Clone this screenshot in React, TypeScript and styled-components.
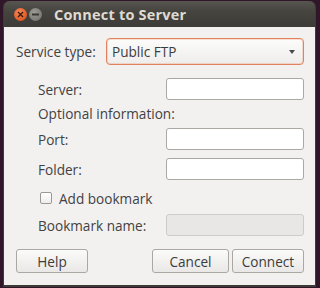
import styled, { createGlobalStyle } from 'styled-components';

const GlobalStyle = createGlobalStyle`
  html, body {
    margin: 0;
    padding: 0;
    background: #2f1628;
  }
  body {
    width: 320px;
    height: 288px;
    overflow: hidden;
    font-family: 'Open Sans', 'DejaVu Sans', sans-serif;
  }
`;

export default function App() {
  return (
    <>
      <GlobalStyle />
      <Desktop>
        <Window>
          <TitleBar>
            <WindowButtons>
              <CloseButton>
                <svg width="7" height="7" viewBox="0 0 7 7">
                  <path d="M1 1 L6 6 M6 1 L1 6" stroke="#3a1a0c" strokeWidth="1.4" />
                </svg>
              </CloseButton>
              <MinButton>
                <svg width="7" height="3" viewBox="0 0 7 3">
                  <rect x="0" y="0.5" width="7" height="2" fill="#3a3935" />
                </svg>
              </MinButton>
            </WindowButtons>
            <Title>Connect to Server</Title>
          </TitleBar>
          <Body>
            <ServiceRow>
              <Label>Service type:</Label>
              <Combo>
                <span>Public FTP</span>
                <Arrow />
              </Combo>
            </ServiceRow>
            <FieldRow $top={13}>
              <Label>Server:</Label>
              <Entry />
            </FieldRow>
            <Section>Optional information:</Section>
            <FieldRow $top={7}>
              <Label>Port:</Label>
              <Entry />
            </FieldRow>
            <FieldRow $top={8}>
              <Label>Folder:</Label>
              <Entry />
            </FieldRow>
            <CheckRow>
              <CheckBox />
              <Label>Add bookmark</Label>
            </CheckRow>
            <FieldRow $top={8}>
              <Label>Bookmark name:</Label>
              <Entry $disabled />
            </FieldRow>
            <ButtonRow>
              <Button $width={72}>Help</Button>
              <Spacer />
              <Button $width={77}>Cancel</Button>
              <Button $width={72}>Connect</Button>
            </ButtonRow>
          </Body>
        </Window>
      </Desktop>
    </>
  );
}

const Desktop = styled.div`
  padding: 1px 4px 0 3px;
  height: 288px;
  box-sizing: border-box;
`;

const Window = styled.div`
  width: 313px;
  height: 286px;
  display: flex;
  flex-direction: column;
  background: #3c3b37;
  border-radius: 6px 6px 0 0;
  box-sizing: border-box;
  padding: 0 1px 2px 1px;
`;

const TitleBar = styled.div`
  height: 26px;
  display: flex;
  align-items: center;
  background: linear-gradient(#57554f, #46443f 40%, #3c3b37);
  border-radius: 6px 6px 0 0;
  padding-left: 10px;
`;

const WindowButtons = styled.div`
  display: flex;
  gap: 2px;
  align-items: center;
`;

const CloseButton = styled.div`
  width: 13px;
  height: 13px;
  border-radius: 50%;
  background: radial-gradient(circle at 40% 35%, #f6875a, #e05a24 70%, #b94416);
  display: flex;
  align-items: center;
  justify-content: center;
`;

const MinButton = styled.div`
  width: 13px;
  height: 13px;
  border-radius: 50%;
  background: radial-gradient(circle at 40% 35%, #9c9a94, #7d7b75 70%, #5f5d58);
  display: flex;
  align-items: center;
  justify-content: center;
`;

const Title = styled.div`
  margin-left: 12px;
  color: #dfdbd2;
  font-weight: 700;
  font-size: 14.5px;
  letter-spacing: 0.2px;
`;

const Body = styled.div`
  flex: 1;
  background: #f2f1f0;
  display: flex;
  flex-direction: column;
  padding: 11px 11px 0 12px;
`;

const Label = styled.span`
  color: #424242;
  font-size: 13.6px;
`;

const ServiceRow = styled.div`
  display: grid;
  grid-template-columns: 90px 1fr;
  align-items: center;
  height: 27px;
`;

const Combo = styled.div`
  height: 27px;
  box-sizing: border-box;
  border: 1px solid #e0825d;
  border-radius: 4px;
  background: linear-gradient(#fcfcfb, #eeedeb);
  box-shadow: inset 0 0 0 1px rgba(240, 160, 130, 0.35);
  display: flex;
  align-items: center;
  justify-content: space-between;
  padding: 0 8px 0 5px;
  font-size: 13.6px;
  color: #3c3c3c;
`;

const Arrow = styled.span`
  width: 0;
  height: 0;
  border-left: 3px solid transparent;
  border-right: 3px solid transparent;
  border-top: 4px solid #4a4a4a;
`;

const FieldRow = styled.div<{ $top: number }>`
  display: grid;
  grid-template-columns: 128px 138px;
  align-items: center;
  padding-left: 22px;
  height: 22px;
  margin-top: ${(p) => p.$top}px;
`;

const Entry = styled.div<{ $disabled?: boolean }>`
  height: 22px;
  box-sizing: border-box;
  border: 1px solid #aba8a3;
  border-radius: 3px;
  background: ${(p) => (p.$disabled ? '#e8e7e5' : '#ffffff')};
  border-color: ${(p) => (p.$disabled ? '#cfccc8' : '#aba8a3')};
`;

const Section = styled.div`
  padding-left: 22px;
  margin-top: 5px;
  height: 16px;
  display: flex;
  align-items: center;
  color: #424242;
  font-size: 13.6px;
`;

const CheckRow = styled.div`
  display: flex;
  align-items: center;
  gap: 7px;
  padding-left: 24px;
  height: 16px;
  margin-top: 10px;
`;

const CheckBox = styled.div`
  width: 12px;
  height: 12px;
  box-sizing: border-box;
  border: 1px solid #9b9893;
  border-radius: 2px;
  background: linear-gradient(#ffffff, #eeedeb);
`;

const ButtonRow = styled.div`
  display: flex;
  gap: 3px;
  margin-top: 13px;
  height: 24px;
`;

const Spacer = styled.div`
  flex: 1;
`;

const Button = styled.div<{ $width: number }>`
  width: ${(p) => p.$width}px;
  height: 24px;
  box-sizing: border-box;
  border: 1px solid #aba8a3;
  border-radius: 3px;
  background: linear-gradient(#fbfbfa, #e9e8e6);
  display: flex;
  align-items: center;
  justify-content: center;
  color: #3c3c3c;
  font-size: 13.6px;
`;
